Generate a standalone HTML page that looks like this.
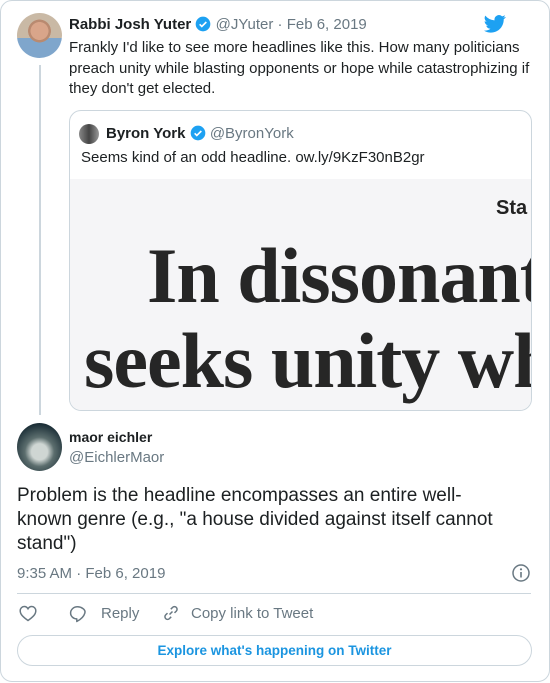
<!DOCTYPE html>
<html><head><meta charset="utf-8"><style>
*{margin:0;padding:0;box-sizing:border-box}
body{width:550px;height:683px;background:#fff;font-family:"Liberation Sans",Arial,sans-serif;color:#1c2022;position:relative;overflow:hidden}
.card{position:absolute;left:0;top:0;width:550px;height:682px;border:1px solid #ccd6dd;border-radius:12px}
.abs{position:absolute;white-space:nowrap}
.gray{color:#697882}
.chk{display:inline-block;width:16px;height:16px;vertical-align:-3px}
</style></head><body>
<div class="card"></div>
<div class="abs" style="left:17px;top:13px;width:45px;height:45px;border-radius:50%;background:radial-gradient(circle at 50% 40%,#d9a58a 0 25%,#b98a70 26% 32%,transparent 33%),linear-gradient(#c9b9a5 0 55%,#7fa6cc 56%);"></div>
<div class="abs" style="left:39px;top:65px;width:2px;height:350px;background:#ccd6dd"></div>
<div class="abs" style="left:69px;top:16px;font-size:15px;"><b>Rabbi Josh Yuter</b> <svg class="chk" viewBox="0 0 24 24"><circle cx="12" cy="12" r="11" fill="#1da1f2"/><path d="M7 12.5l3.2 3.2L17 9" stroke="#fff" stroke-width="2.4" fill="none"/></svg> <span class="gray">@JYuter · Feb 6, 2019</span></div>
<svg class="abs" style="left:484px;top:14px" width="22" height="20" viewBox="0 0 24 20"><path fill="#1da1f2" d="M23.6 2.4c-.9.4-1.8.6-2.8.8 1-.6 1.8-1.5 2.1-2.7-.9.6-2 1-3.1 1.2A4.9 4.9 0 0 0 11.5 6 13.9 13.9 0 0 1 1.4.9a4.9 4.9 0 0 0 1.5 6.6c-.8 0-1.600-.3-2.2-.6 0 2.4 1.7 4.4 3.9 4.8-.7.2-1.5.2-2.2.1.6 2 2.4 3.4 4.6 3.4A9.9 9.9 0 0 1 0 17.2 14 14 0 0 0 7.5 19.4c9.1 0 14-7.5 14-14v-.6c1-.7 1.8-1.6 2.4-2.5z"/></svg>
<div class="abs" style="left:69px;top:38px;font-size:15px;line-height:20.5px;white-space:normal;width:465px">Frankly I'd like to see more headlines like this. How many politicians preach unity while blasting opponents or hope while catastrophizing if they don't get elected.</div>
<div class="abs" style="left:69px;top:110px;width:463px;height:301px;border:1px solid #ccd6dd;border-radius:12px;overflow:hidden">
 <div style="position:absolute;left:0;top:68px;width:463px;height:233px;background:#f5f5f7;overflow:hidden">
  <div class="abs" style="left:426px;top:18px;font-size:20px;font-weight:bold;color:#222">Sta</div>
  <div class="abs" style="left:77px;top:52px;font-family:'Liberation Serif',serif;font-weight:bold;font-size:78px;color:#262626;letter-spacing:-1px">In dissonant</div>
  <div class="abs" style="left:14px;top:137px;font-family:'Liberation Serif',serif;font-weight:bold;font-size:78px;color:#262626;letter-spacing:-1px">seeks unity wh</div>
 </div>
</div>
<div class="abs" style="left:79px;top:124px;width:20px;height:20px;border-radius:50%;background:linear-gradient(90deg,#888,#444 50%,#999)"></div>
<div class="abs" style="left:106px;top:125px;font-size:15px"><b>Byron York</b> <svg class="chk" viewBox="0 0 24 24"><circle cx="12" cy="12" r="11" fill="#1da1f2"/><path d="M7 12.5l3.2 3.2L17 9" stroke="#fff" stroke-width="2.4" fill="none"/></svg> <span class="gray">@ByronYork</span></div>
<div class="abs" style="left:81px;top:149px;font-size:15px">Seems kind of an odd headline. ow.ly/9KzF30nB2gr</div>
<div class="abs" style="left:17px;top:423px;width:45px;height:48px;border-radius:50%;background:radial-gradient(circle at 50% 60%,#cfd6d3 0 22%,#5c6e6e 40%,#1d3038 75%)"></div>
<div class="abs" style="left:69px;top:429px;font-size:14px;font-weight:bold">maor eichler</div>
<div class="abs gray" style="left:69px;top:449px;font-size:15px">@EichlerMaor</div>
<div class="abs" style="left:17px;top:484px;font-size:19px;line-height:24px;white-space:normal;width:490px">Problem is the headline encompasses an entire well-known genre (e.g., "a house divided against itself cannot stand")</div>
<div class="abs gray" style="left:17px;top:565px;font-size:15px">9:35 AM · Feb 6, 2019</div>
<svg class="abs" style="left:512px;top:564px" width="18" height="18" viewBox="0 0 18 18"><circle cx="9" cy="9" r="8" fill="none" stroke="#697882" stroke-width="1.5"/><circle cx="9" cy="5.3" r="1.1" fill="#697882"/><path d="M9 8v5.5" stroke="#697882" stroke-width="1.6"/></svg>
<div class="abs" style="left:17px;top:593px;width:514px;height:1px;background:#ccd6dd"></div>
<svg class="abs" style="left:19px;top:605px" width="18" height="17" viewBox="0 0 18 17"><path d="M9 15.5C4 12 1.2 9.3 1.2 5.7 1.2 3.4 3 1.5 5.2 1.5c1.6 0 3 .9 3.8 2.3.8-1.4 2.2-2.3 3.8-2.3 2.2 0 4 1.9 4 4.2 0 3.6-2.8 6.300-7.8 9.8z" fill="none" stroke="#697882" stroke-width="1.5"/></svg>
<svg class="abs" style="left:69px;top:605px" width="18" height="18" viewBox="0 0 18 18"><path d="M8.5 1.8C4.6 1.8 1.6 4.6 1.6 8c0 3.3 2.8 5.8 6.2 5.9v2.6c2.5-1.3 6.8-4 8-8.3.1-.5.2-.9.2-1.4C16 4.6 12.7 1.8 8.5 1.8z" fill="none" stroke="#697882" stroke-width="1.5" stroke-linejoin="round"/></svg>
<div class="abs gray" style="left:101px;top:605px;font-size:15px">Reply</div>
<svg class="abs" style="left:162px;top:604px" width="18" height="18" viewBox="0 0 18 18"><g fill="none" stroke="#697882" stroke-width="1.5"><path d="M7.5 10.5l3-3"/><path d="M8.8 5.2l1.8-1.8a2.6 2.6 0 0 1 3.7 3.7l-1.8 1.8"/><path d="M9.2 12.8l-1.8 1.8a2.6 2.6 0 0 1-3.700-3.7l1.8-1.8"/></g></svg>
<div class="abs gray" style="left:191px;top:605px;font-size:15px">Copy link to Tweet</div>
<div class="abs" style="left:17px;top:635px;width:515px;height:31px;border:1px solid #ccd6dd;border-radius:16px;text-align:center;line-height:29px;font-size:13.5px;font-weight:bold;color:#1b95e0">Explore what's happening on Twitter</div>
</body></html>
